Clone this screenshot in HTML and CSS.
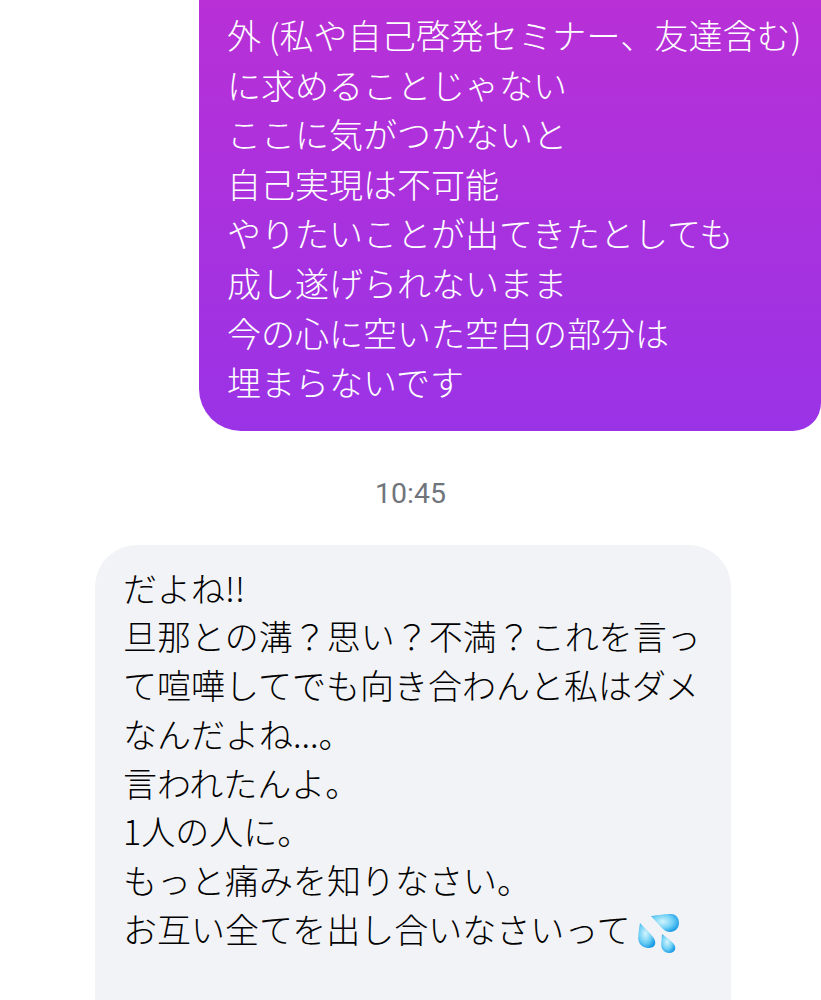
FILE: index.html
```html
<!DOCTYPE html>
<html lang="ja">
<head>
  <meta charset="UTF-8">
  <title>メッセージ</title>
  <link rel="stylesheet" href="styles.css">
</head>
<body>
  <div class="chat">
    <div class="bubble sent">
      <span class="line-first">外 (私や自己啓発セミナー、友達含む)</span><br>
      に求めることじゃない<br>
      ここに気がつかないと<br>
      自己実現は不可能<br>
      やりたいことが出てきたとしても<br>
      成し遂げられないまま<br>
      今の心に空いた空白の部分は<br>
      埋まらないです
    </div>

    <div class="time">10:45</div>

    <div class="bubble received">
      だよね!!<br>
      旦那との溝？思い？不満？これを言っ<br>
      て喧嘩してでも向き合わんと私はダメ<br>
      なんだよね...。<br>
      言われたんよ。<br>
      1人の人に。<br>
      もっと痛みを知りなさい。<br>
      お互い全てを出し合いなさいって<svg class="sweat" viewBox="0 0 42 41" aria-hidden="true">
        <defs>
          <radialGradient id="drop" cx="0.42" cy="0.42" r="0.62">
            <stop offset="0" stop-color="#d2f4fd"/>
            <stop offset="0.6" stop-color="#6fd0f5"/>
            <stop offset="1" stop-color="#1c9ce6"/>
          </radialGradient>
        </defs>
        <path d="M13 3 C20 2 28 1 33 1 C38 1 41 5 41 10 C41 15 37 19 32 19 C28 19 25 16 22 13 C19 10 16 6 13 3 Z" fill="url(#drop)"/>
        <path d="M2 10 C6 14 11 19 15 24 C18 28 18 32 15 34 C11 36 5 35 2 31 C0 28 0 24 0.6 20 C1 16 1.5 13 2 10 Z" fill="url(#drop)"/>
        <path d="M24 21 C28 24 32 27 35 30 C38 33 38 37 35 39 C32 41 27 40 25 37 C23 35 23 31 23.5 28 C23.7 26 23.8 23 24 21 Z" fill="url(#drop)"/>
      </svg>
    </div>
  </div>
</body>
</html>
```

FILE: styles.css
```css
body {
  margin: 0;
  background: #fff;
  font-family: "Noto Sans CJK JP", "Noto Sans", sans-serif;
}
.chat {
  height: 1000px;
  overflow: hidden;
}
.bubble {
  font-size: 34px;
  font-weight: 300;
}
.sent {
  margin-left: 199px;
  padding: 10px 0 24px 28px;
  line-height: 49.6px;
  color: #fff;
  background: linear-gradient(to bottom, #b830d6, #9a33e6);
  border-radius: 0 0 28px 42px;
  white-space: nowrap;
}
.line-first {
  letter-spacing: 0.1px;
}
.time {
  margin-top: 45px;
  text-align: center;
  font-family: Roboto, sans-serif;
  font-size: 28.5px;
  line-height: 36px;
  color: #70757c;
}
.received {
  width: 608px;
  margin: 33px 0 0 95px;
  padding: 19px 0 60px 28px;
  line-height: 48.7px;
  color: #000;
  background: #f2f3f6;
  border-radius: 42px 42px 0 0;
  white-space: nowrap;
}
.sweat {
  width: 42px;
  height: 41px;
  margin-left: 7px;
  vertical-align: -11px;
}
```
